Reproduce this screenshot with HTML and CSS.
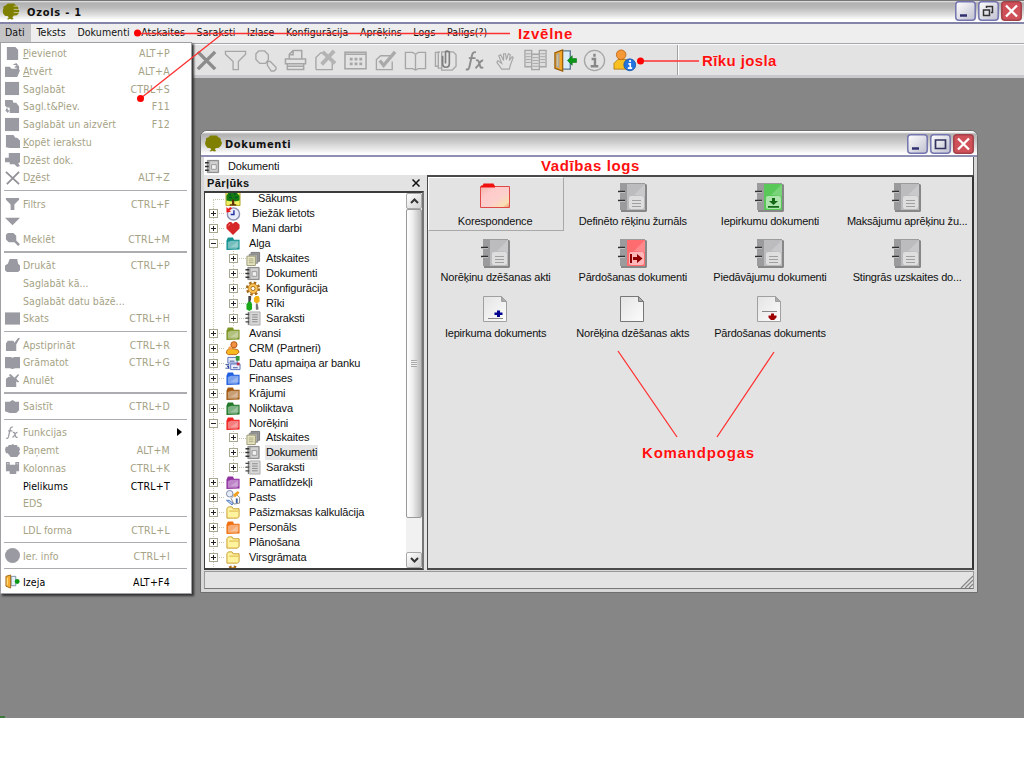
FILE: index.html
```html
<!DOCTYPE html>
<html lang="lv">
<head>
<meta charset="utf-8">
<title>Ozols - 1</title>
<link rel="stylesheet" href="styles.css">
</head>
<body>
<svg class="defs" width="0" height="0" aria-hidden="true">
  <defs>
    <linearGradient id="gBtn" x1="0" y1="0" x2="1" y2="1"><stop offset="0" stop-color="#fff"/><stop offset="1" stop-color="#bfbfd0"/></linearGradient>
    <linearGradient id="gPink" x1="0" y1="0" x2="1" y2="1"><stop offset="0" stop-color="#f3b3a8"/><stop offset=".3" stop-color="#ffcaca"/><stop offset=".6" stop-color="#fbd0cc"/><stop offset=".85" stop-color="#f8e0b0"/><stop offset="1" stop-color="#e88a60"/></linearGradient>
    <linearGradient id="gPage" x1="0" y1="0" x2="1" y2="1"><stop offset="0" stop-color="#e4e4e4"/><stop offset="1" stop-color="#fcfcfc"/></linearGradient>

    <symbol id="oak" viewBox="0 0 16 16"><path fill="#808000" d="M5 .5h6l1.500 1.500 2 1 .5 2.500 1 2-1 2.500-2 2-3 .5-.7 1 1.200 1.500-2 .5-1.500-.7-1.500.7-1.500-.5L5.800 14l-.6-1.500-3-.5-1.700-2.300L0 7.500l.8-2L1 3l2.200-1z"/></symbol>
    <symbol id="oakStripe" viewBox="0 0 16 16"><use href="#oak"/><path d="M10.500 3H16M10.500 6H16M10.500 9H16M10.500 12H16" stroke="#d8d8c0" stroke-width=".7"/></symbol>

    <symbol id="folder" viewBox="0 0 16 16"><path d="M1 5 2.500 1.500h5.500L9 4h6v10.500l-14 .5z" fill="currentColor"/><path d="M2.500 6.500 6 5h8v7l-2 1.500H2.500z" fill="#fff" opacity=".42"/><path d="M5 12 13 6v6z" fill="#fff" opacity=".25"/></symbol>
    <symbol id="yfolder" viewBox="0 0 16 16"><path d="M1.500 4 3 2h4l1 2h6.500v8.500l-2 1.500h-11z" fill="#fff3a0" stroke="#c89a28"/><path d="M4 6.500h10" stroke="#d8b040"/></symbol>
    <symbol id="pages" viewBox="0 0 16 16"><path d="M6 1.500h9V11H6z" fill="#999" stroke="#777"/><path d="M4 3.500h9V13H4z" fill="#aaa" stroke="#888"/><path d="M1.500 5.500h9v10h-9z" fill="#e6e4c0" stroke="#9c9a78"/><path d="M3.500 8.500h5M3.500 10.500h5M3.500 12.500h5" stroke="#aaa880"/></symbol>
    <symbol id="book" viewBox="0 0 16 16"><path d="M2.500 1.500h12v13h-12z" fill="#aaa" stroke="#858585"/><path d="M5.500 2.500h8v11h-8z" fill="#d0d0d0"/><path d="M7 6h5v5H7z" fill="#f2f2f2" stroke="#999"/><path d="M0 4h4M0 8h4M0 12h4" stroke="#333" stroke-width="1.400"/></symbol>
    <symbol id="list" viewBox="0 0 16 16"><path d="M4.500 1h11v14h-11z" fill="#d8d8d8" stroke="#aaa"/><path d="M7 4h6M7 6.500h6M7 9h6M7 11.500h6" stroke="#888"/><path d="M3 1v14" stroke="#555"/><path d="M0 3.500h4M0 7.500h4M0 11.500h4" stroke="#444" stroke-width="1.300"/></symbol>
    <symbol id="tree" viewBox="0 0 16 16"><path fill="#f0f060" stroke="#b0a020" d="M.5.5h15v15H.5z"/><path fill="#147a14" d="M3 2h9l3 3v5l-4 1H5l-4-1V5z"/><path d="M4 4h2M9 3h2M4 7h3M10 7h3" stroke="#052" stroke-width="1.500"/><path fill="#5a2a0a" d="m7 9 2 0 .5 5h2v1.500h-7V14H7z"/></symbol>
    <symbol id="clock" viewBox="0 0 16 16"><circle cx="8.500" cy="8.500" r="6.500" fill="#e8ecfa" stroke="#8c90b0" stroke-width="1.500"/><path d="M9 4.500V9H5.500" fill="none" stroke="#2030a0" stroke-width="1.500"/><path d="M1 1v6l5-1-2-1 3-2.500L5 1 3 3z" fill="#f01818"/></symbol>
    <symbol id="heart" viewBox="0 0 16 16"><path d="M8 15 1 8V4l3-3h2l2 2 2-2h2l3 3v4z" fill="#d62828"/><path d="m3 5 2-2" stroke="#f89090"/></symbol>
    <symbol id="gear" viewBox="0 0 16 16"><circle cx="8" cy="8" r="6.200" fill="none" stroke="#a06a18" stroke-width="2.800" stroke-dasharray="2.600 2.270"/><circle cx="8" cy="8" r="5.200" fill="#f8c458" stroke="#c88020"/><circle cx="8" cy="8" r="2.200" fill="#fff" stroke="#a87018"/></symbol>
    <symbol id="tools" viewBox="0 0 16 16"><path d="M3 0h3v3l-1 4H3z" fill="#444"/><path d="M1 9 3 6h3l1 3v5l-3 2-3-2z" fill="#18a818"/><path d="m9 2 2-2h3l1 2v4l-3 2-3-2z" fill="#f0b010"/><path d="M11 8h2l1 6-2 1-1-1z" fill="#777"/></symbol>
    <symbol id="people" viewBox="0 0 16 16"><circle cx="9" cy="4" r="3.300" fill="#f09040" stroke="#b05010"/><path d="M1 13q-.5-4 4-5l5 .5q4 0 4.500 3.500l-3 2.500H3z" fill="#f8b820" stroke="#c06010"/><circle cx="5" cy="7.500" r="2" fill="#f8a050"/></symbol>
    <symbol id="bank" viewBox="0 0 16 16"><path d="M2.500 1.500h10v6h-10z" fill="#e8ecff" stroke="#5570b8"/><path d="M5.500 8.500h10v6h-10z" fill="#e8ecff" stroke="#5570b8"/><path d="M4.500 5.500h5M8 12.500h5M0 9h4M0 13h4" stroke="#405090"/><path d="M11 0h4v5h-4z" fill="#389838"/><path d="M12 7h3v3h-3z" fill="#c03048"/><path d="M1 10h3v4z" fill="#2840a0"/></symbol>
    <symbol id="mail" viewBox="0 0 16 16"><circle cx="4.500" cy="4" r="3.500" fill="#e8ecf8" stroke="#7888a8"/><path d="M6 9 11 4l4 4v6l-6 1z" fill="#fff" stroke="#888"/><path d="m8 5 5-4 2 2-5 5z" fill="#f0a020"/><path d="M1 11h3l4 3-1 2z" fill="#b8d0ff" stroke="#5078b8"/><path d="M11 9h2v5h-2z" fill="#4060a0"/></symbol>
    <symbol id="door" viewBox="0 0 24 24"><path d="M7 2h10v19H7z" fill="#d8ecfa" stroke="#5a7890"/><path d="M1 4 9 1v22l-8-3z" fill="#f6a828" stroke="#9a6010"/><path d="m3 6 2-1v14l-2-1z" fill="#ffe080"/><path d="m14 12 5-5v3h4.500v4H19v3z" fill="#0a9818" stroke="#056a10" stroke-width=".6"/></symbol>
    <symbol id="doorSmall" viewBox="0 0 16 16"><path d="M6.500 2.500h5v10h-5z" fill="#e4f0fa" stroke="#7890a0"/><path d="M1 2.500 6 1v14l-5-2z" fill="#f8ac30" stroke="#a06818"/><path d="M2.500 4v8" stroke="#ffe890"/><circle cx="13" cy="8" r="2.600" fill="#0a9818"/></symbol>

    <symbol id="notebook" viewBox="0 0 32 32"><path d="M4 3h25l1 1v26l-1 1H4z" fill="#878787"/><path d="M3 2h25v27H3z" fill="#9b9b9d"/><path d="M10 3h18v26H10z" fill="currentColor"/><path d="M28 3v12L17 14z" fill="#fff" opacity=".2"/><rect x="12" y="15" width="15" height="13" rx="2" fill="#fff" opacity=".5"/><path d="M1 11.500h7M1 20.500h7" stroke="#eee"/><path d="M1 10.500h7M1 19.500h7" stroke="#303030" stroke-width="1.600"/></symbol>
    <symbol id="sheet" viewBox="0 0 32 32"><path d="M3.500 3.500h18l5 5v20h-23z" fill="url(#gPage)" stroke="currentColor"/><path d="M21.500 3.500v5h5z" fill="#aaa" stroke="currentColor"/></symbol>

    <symbol id="mDoc" viewBox="0 0 16 16"><path d="M2 1h9l3 3v11H2z"/></symbol>
    <symbol id="mOpen" viewBox="0 0 16 16"><path d="M0 4h5l2 2h5l1-1h-3l2-3 3 1v4l1 1-3 7H0zM8 2l4-2 2 2z"/></symbol>
    <symbol id="mSave" viewBox="0 0 16 16"><path d="M0 1h15v14H0z"/></symbol>
    <symbol id="mAdd" viewBox="0 0 16 16"><path d="M0 1h8l1 3h3l3 4v7H5V9H2L0 7zM1 10h2v2h2l-2 3-3-3h1z"/></symbol>
    <symbol id="mCopy" viewBox="0 0 16 16"><path d="M1 1h8l2 3h2l3 3v8H5l-4-1z"/></symbol>
    <symbol id="mCut" viewBox="0 0 16 16"><path d="M4 1h12v10l-2 1 2 3-3 1-3-3H5v-2H0V6h4z"/></symbol>
    <symbol id="mX" viewBox="0 0 16 16"><path d="m1 2 14 13M15 2 2 15" stroke="#929298" stroke-width="2" fill="none"/></symbol>
    <symbol id="mFilter" viewBox="0 0 16 16"><path d="M1 2h14v2l-5 5v6H6V9L1 4z"/></symbol>
    <symbol id="mDown" viewBox="0 0 16 16"><path d="M0 4h16l-8 8z"/></symbol>
    <symbol id="mFind" viewBox="0 0 16 16"><path d="M3 1h6l3 3v5l4 4-2 2-4-4H4L1 8V3z"/></symbol>
    <symbol id="mPrint" viewBox="0 0 16 16"><path d="M5 1h8l1 5 2 2v5l-2 2H2l-2-2V8l3-2z"/></symbol>
    <symbol id="mView" viewBox="0 0 16 16"><path d="M0 1.500h16v13H0z"/></symbol>
    <symbol id="mOk" viewBox="0 0 16 16"><path d="M3 4h6l1 2 4-5h2l-4 7v7H1V7z"/></symbol>
    <symbol id="mBook" viewBox="0 0 16 16"><path d="M0 2h6l2 1 2-1h6v12h-5l-3 1-3-1H0z"/></symbol>
    <symbol id="mVoid" viewBox="0 0 16 16"><path d="M1 6l3-2h2L4 2l2-1 4 4 4-4 1 1-3 4 3 3-1 1-2-1v6H1z"/></symbol>
    <symbol id="mLink" viewBox="0 0 16 16"><path d="M0 3h5l3-2 3 2h4v9l-3 3H5l-5-2z"/></symbol>
    <symbol id="mHand" viewBox="0 0 16 16"><path d="M1 4h2l1-2h3l1-1 2 1 3 0v2h2l1 3-1 2 1 2-3 4H6l-3-4H1L0 7z"/></symbol>
    <symbol id="mCols" viewBox="0 0 16 16"><path d="M1 2h4v3h6V2h4v10h-3v3H5v-3H1z"/><path d="M2.500 3.500h1v1h-1zM12.500 3.500h1v1h-1z" fill="#fff"/></symbol>
    <symbol id="mInfo" viewBox="0 0 16 16"><circle cx="8" cy="8" r="8"/></symbol>
    <symbol id="fx" viewBox="0 0 24 24"><path d="M2 21q2.500 1.500 3.500-2L8.500 6q1-3.500 4-2.500M5 9.500h7M12.500 12q2-1 3 1.500l1.500 5q1 2 3 .5M20 12q-2-.5-3.500 2.500T12 20" fill="none" stroke="currentColor" stroke-width="2"/></symbol>
  </defs>
</svg>

<div class="desktop">
  <header class="titlebar">
    <svg class="app-icon" width="18" height="17"><use href="#oakStripe"/></svg>
    <span class="app-title">Ozols - 1</span>
    <div class="win-buttons">
      <svg width="21" height="20" viewBox="0 0 21 20"><rect x=".8" y=".8" width="19.400" height="18.400" rx="3" fill="url(#gBtn)" stroke="#7474b0" stroke-width="1.500"/><path d="M5 14.500h7" stroke="#303070" stroke-width="2.500"/></svg>
      <svg width="21" height="20" viewBox="0 0 21 20"><rect x=".8" y=".8" width="19.400" height="18.400" rx="3" fill="url(#gBtn)" stroke="#7474b0" stroke-width="1.500"/><path d="M8.500 7V5.500h6v6H13M5.500 9h6v5.500h-6zM5 9h7M8 5.500h7" fill="none" stroke="#333" stroke-width="1.500"/></svg>
      <svg width="21" height="20" viewBox="0 0 21 20"><rect x=".8" y=".8" width="19.400" height="18.400" rx="3" fill="#cf5058" stroke="#a44048" stroke-width="1.500"/><path d="m5 4.500 11 11m0-11-11 11" stroke="#fff" stroke-width="2.300"/></svg>
    </div>
  </header>

  <nav class="menubar">
    <span class="open">Dati</span><span>Teksts</span><span>Dokumenti</span><span>Atskaites</span><span>Saraksti</span><span>Izlase</span><span>Konfigurācija</span><span>Aprēķins</span><span>Logs</span><span>Palīgs(?)</span>
  </nav>

  <div class="toolbar">
    <div class="tools">
      <svg viewBox="0 0 24 24"><path d="m3 3 18 18M21 3 3 21" stroke="#8c8c8c" stroke-width="3.600"/></svg>
      <svg viewBox="0 0 24 24"><path d="M1.500 2.500h21v3L15 13v8.500H9.500V13l-8-7.500z"/></svg>
      <svg viewBox="0 0 24 24"><path d="M5 2h6l4 4v5l-3 4H6l-4-4V5zM14 13l3 0 6 6v2l-2 2h-3l-4-6z"/></svg>
      <svg viewBox="0 0 24 24"><path d="M5.500 10.500v-5l4-4h9v9M1.500 10.500h21v5h-21zM3.500 15.500v6h17v-6M3 18h18M9.500 2v4h-4" stroke-width="1.600"/></svg>
      <svg viewBox="0 0 24 24"><path d="M2 21.500V9l5-5h3M2 21.500h17V14"/><path d="m9 3 13 12M21 2 8 16" stroke="#b4b4b4" stroke-width="4"/></svg>
      <svg viewBox="0 0 24 24"><path d="M1 3.500h22v17H1zM1 5.500h22" stroke-width="1.600"/><path d="M6 10.500h13M6 15.500h13" stroke-width="3" stroke-dasharray="3 2"/></svg>
      <svg viewBox="0 0 24 24"><path d="M17 7H7L2.500 11v10.500H19V13"/><path d="m6 12 4 5L22 3" stroke="#aaa" stroke-width="3.500"/></svg>
      <svg viewBox="0 0 24 24"><path d="M1.500 3.500H9l3 2 3-2h7.500v17H15l-3 1.500-3-1.500H1.500zM12 5v16"/></svg>
      <svg viewBox="0 0 24 24"><path d="M5 18H1.500V3.500H6M6 3H4.500v17H8M8 3h12l3 3v12l-4 4H8z"/><path d="M9 7v8q0 4 3.500 4t3.500-4V3q-4-2-4 1v11" stroke="#7e7e7e" stroke-width="1.700"/></svg>
      <svg viewBox="0 0 24 24" class="fx"><use href="#fx"/></svg>
      <svg viewBox="0 0 24 24"><path d="M8 21 3 14l1-2 4 3-3-8 2-1 3 6V5h2l1 6 2-6 2 1-1 6 3-4 1 1-3 8-1 4z" stroke-width="1.200"/></svg>
      <svg viewBox="0 0 24 24"><path d="M1 1.500h7v17H1zM16 1.500h7v17h-7zM8 5.500h8v16H8z" fill="#ddd"/><path d="M2 5h5M2 8h5M2 11h5M2 14h5M17 5h5M17 8h5M17 11h5M17 14h5M9 9h6M9 12h6M9 15h6M9 18h6" stroke-width="1"/></svg>
      <svg viewBox="0 0 24 24"><use href="#door"/></svg>
      <svg viewBox="0 0 24 24"><circle cx="12" cy="12" r="10.500"/><path d="M9 10.500h3.500V18M8 18h8M12 5v3" stroke="#888" stroke-width="2.500"/></svg>
      <svg viewBox="0 0 24 24"><path d="M1 21v-6l4-4h9l2 3v7z" fill="#f8c020" stroke="#b07010" stroke-width=".8"/><circle cx="8.500" cy="6" r="5" fill="#f59838" stroke="#b86010" stroke-width=".8"/><circle cx="17.500" cy="16.500" r="6.200" fill="#2474e0" stroke="#1450a0" stroke-width=".8"/><path d="M16 15.500h2V20M15.500 20h4.500M17.800 11.500v2" stroke="#fff" stroke-width="1.700"/></svg>
    </div>
    <div class="toolbar-end"></div>
  </div>

  <section class="window">
    <header class="w-title">
      <svg width="17" height="17"><use href="#oak"/></svg>
      <span>Dokumenti</span>
      <div class="win-buttons">
        <svg width="21" height="20" viewBox="0 0 21 20"><rect x=".8" y=".8" width="19.400" height="18.400" rx="3" fill="url(#gBtn)" stroke="#7474b0" stroke-width="1.500"/><path d="M5 14.500h7" stroke="#303070" stroke-width="2.500"/></svg>
        <svg width="21" height="20" viewBox="0 0 21 20"><rect x=".8" y=".8" width="19.400" height="18.400" rx="3" fill="url(#gBtn)" stroke="#7474b0" stroke-width="1.500"/><path d="M5.500 6h10v8.500h-10zM5 6h11" fill="none" stroke="#333360" stroke-width="1.700"/></svg>
        <svg width="21" height="20" viewBox="0 0 21 20"><rect x=".8" y=".8" width="19.400" height="18.400" rx="3" fill="#cf5058" stroke="#a44048" stroke-width="1.500"/><path d="m5 4.500 11 11m0-11-11 11" stroke="#fff" stroke-width="2.300"/></svg>
      </div>
    </header>
    <div class="w-path"><svg width="15" height="15"><use href="#book"/></svg><span>Dokumenti</span></div>
    <div class="w-body">
      <aside class="browser">
        <div class="b-head"><b>Pārļūks</b><svg width="8" height="8" viewBox="0 0 8 8"><path d="m.5.500 7 7m0-7-7 7" stroke="#111" stroke-width="1.500"/></svg></div>
        <div class="b-box">
          <ul class="b-tree">
            <li class="leaf wide"><i></i><svg><use href="#tree"/></svg><span>Sākums</span></li>
            <li class="mid"><i class="plus"></i><svg><use href="#clock"/></svg><span>Biežāk lietots</span></li>
            <li class="mid"><i class="plus"></i><svg><use href="#heart"/></svg><span>Mani darbi</span></li>
            <li><i class="minus"></i><svg class="teal"><use href="#folder"/></svg><span>Alga</span></li>
            <li class="sub"><i class="plus"></i><svg><use href="#pages"/></svg><span>Atskaites</span></li>
            <li class="sub"><i class="plus"></i><svg><use href="#book"/></svg><span>Dokumenti</span></li>
            <li class="sub"><i class="plus"></i><svg><use href="#gear"/></svg><span>Konfigurācija</span></li>
            <li class="sub"><i class="plus"></i><svg><use href="#tools"/></svg><span>Rīki</span></li>
            <li class="sub"><i class="plus"></i><svg><use href="#list"/></svg><span>Saraksti</span></li>
            <li><i class="plus"></i><svg class="olive"><use href="#folder"/></svg><span>Avansi</span></li>
            <li><i class="plus"></i><svg><use href="#people"/></svg><span>CRM (Partneri)</span></li>
            <li><i class="plus"></i><svg><use href="#bank"/></svg><span>Datu apmaiņa ar banku</span></li>
            <li><i class="plus"></i><svg class="blue"><use href="#folder"/></svg><span>Finanses</span></li>
            <li><i class="plus"></i><svg class="brown"><use href="#folder"/></svg><span>Krājumi</span></li>
            <li><i class="plus"></i><svg class="green"><use href="#folder"/></svg><span>Noliktava</span></li>
            <li><i class="minus"></i><svg class="red"><use href="#folder"/></svg><span>Norēķini</span></li>
            <li class="sub"><i class="plus"></i><svg><use href="#pages"/></svg><span>Atskaites</span></li>
            <li class="sub"><i class="plus"></i><svg><use href="#book"/></svg><span class="sel">Dokumenti</span></li>
            <li class="sub"><i class="plus"></i><svg><use href="#list"/></svg><span>Saraksti</span></li>
            <li><i class="plus"></i><svg class="purple"><use href="#folder"/></svg><span>Pamatlīdzekļi</span></li>
            <li><i class="plus"></i><svg><use href="#mail"/></svg><span>Pasts</span></li>
            <li><i class="plus"></i><svg><use href="#yfolder"/></svg><span>Pašizmaksas kalkulācija</span></li>
            <li><i class="plus"></i><svg class="orange"><use href="#folder"/></svg><span>Personāls</span></li>
            <li><i class="plus"></i><svg><use href="#yfolder"/></svg><span>Plānošana</span></li>
            <li><i class="plus"></i><svg><use href="#yfolder"/></svg><span>Virsgrāmata</span></li>
            <li class="near"><i class="plus"></i><svg><use href="#gear"/></svg><span>Konfigurācija</span></li>
          </ul>
          <div class="scroll">
            <div class="s-btn"><svg width="9" height="6" viewBox="0 0 9 6"><path d="m1 5 3.500-3.500L8 5" fill="none" stroke="#333" stroke-width="2"/></svg></div>
            <div class="s-thumb"><span></span></div>
            <div class="s-track"></div>
            <div class="s-btn"><svg width="9" height="6" viewBox="0 0 9 6"><path d="m1 1 3.500 3.500L8 1" fill="none" stroke="#333" stroke-width="2"/></svg></div>
          </div>
        </div>
      </aside>
      <div class="commands">
        <div class="cmd active"><svg viewBox="0 0 32 32"><path d="M3 6 4.500 2.500h10L16 6z" fill="#f01010"/><path d="M1.500 5.500h29v21h-29z" fill="url(#gPink)" stroke="#e04848"/><path d="M2 5.500h14" stroke="#f01010" stroke-width="2"/></svg><span>Korespondence</span></div>
        <div class="cmd"><svg viewBox="0 0 32 32" class="nb"><use href="#notebook"/><path d="M15 19.500h9M15 22.500h9M15 25.500h9" stroke="#a0a0a0"/></svg><span>Definēto rēķinu žurnāls</span></div>
        <div class="cmd"><svg viewBox="0 0 32 32" class="nb-green"><use href="#notebook"/><path d="M18 17h3v3h3l-4.500 4L15 20h3zM14 25h11v1.800H14z" fill="#146a14"/></svg><span>Iepirkumu dokumenti</span></div>
        <div class="cmd"><svg viewBox="0 0 32 32" class="nb"><use href="#notebook"/><path d="M15 19.500h9M15 22.500h9M15 25.500h9" stroke="#a0a0a0"/></svg><span>Maksājumu aprēķinu žu...</span></div>
        <div class="cmd"><svg viewBox="0 0 32 32" class="nb"><use href="#notebook"/><path d="M15 19.500h9M15 22.500h9M15 25.500h9" stroke="#a0a0a0"/></svg><span>Norēķinu dzēšanas akti</span></div>
        <div class="cmd"><svg viewBox="0 0 32 32" class="nb-red"><use href="#notebook"/><path d="M13 17h2v9h-2zM16 20h4v-3l5.500 4.500L20 26v-3h-4z" fill="#900000"/></svg><span>Pārdošanas dokumenti</span></div>
        <div class="cmd"><svg viewBox="0 0 32 32" class="nb"><use href="#notebook"/><path d="M15 19.500h9M15 22.500h9M15 25.500h9" stroke="#a0a0a0"/></svg><span>Piedāvājumu dokumenti</span></div>
        <div class="cmd"><svg viewBox="0 0 32 32" class="nb"><use href="#notebook"/><path d="M15 19.500h9M15 22.500h9M15 25.500h9" stroke="#a0a0a0"/></svg><span>Stingrās uzskaites do...</span></div>
        <div class="cmd"><svg viewBox="0 0 32 32" class="sh"><use href="#sheet"/><path d="M17 17.500h3v2h2.500v2.500H20v2h-3v-2h-2.500v-2.500H17z" fill="#000090"/><path d="M8 25.500h15" stroke="#888"/></svg><span>Iepirkuma dokuments</span></div>
        <div class="cmd"><svg viewBox="0 0 32 32" class="sh dark"><use href="#sheet"/></svg><span>Norēķina dzēšanas akts</span></div>
        <div class="cmd"><svg viewBox="0 0 32 32" class="sh"><use href="#sheet"/><path d="M17 20.500h3v2h2.500v2L20 27h-3l-2.500-2.500v-2H17z" fill="#a00000"/><path d="M8 18.500h15" stroke="#888"/></svg><span>Pārdošanas dokuments</span></div>
      </div>
    </div>
    <footer class="w-status"><svg width="13" height="13" viewBox="0 0 13 13"><path d="M1 13 13 1M5 13l8-8M9 13l4-4" stroke="#888" stroke-width="1.300"/></svg></footer>
  </section>

  <div class="dropdown">
    <div class="mi"><svg><use href="#mDoc"/></svg><span><u>P</u>ievienot</span><kbd>ALT+P</kbd></div>
    <div class="mi"><svg><use href="#mOpen"/></svg><span><u>A</u>tvērt</span><kbd>ALT+A</kbd></div>
    <div class="mi"><svg><use href="#mSave"/></svg><span>Saglabāt</span><kbd>CTRL+S</kbd></div>
    <div class="mi"><svg><use href="#mAdd"/></svg><span>Sagl.t&amp;Piev.</span><kbd>F11</kbd></div>
    <div class="mi"><svg><use href="#mSave"/></svg><span>Saglabāt un aizvērt</span><kbd>F12</kbd></div>
    <div class="mi"><svg><use href="#mCopy"/></svg><span><u>K</u>opēt ierakstu</span></div>
    <div class="mi"><svg><use href="#mCut"/></svg><span>Dzēst dok.</span></div>
    <div class="mi"><svg><use href="#mX"/></svg><span>D<u>z</u>ēst</span><kbd>ALT+Z</kbd></div>
    <hr>
    <div class="mi"><svg><use href="#mFilter"/></svg><span>Filtrs</span><kbd>CTRL+F</kbd></div>
    <div class="mi"><svg><use href="#mDown"/></svg></div>
    <div class="mi"><svg><use href="#mFind"/></svg><span>Meklēt</span><kbd>CTRL+M</kbd></div>
    <hr>
    <div class="mi"><svg><use href="#mPrint"/></svg><span>Drukāt</span><kbd>CTRL+P</kbd></div>
    <div class="mi"><svg></svg><span>Saglabāt kā...</span></div>
    <div class="mi"><svg></svg><span>Saglabāt datu bāzē...</span></div>
    <div class="mi"><svg><use href="#mView"/></svg><span>Skats</span><kbd>CTRL+H</kbd></div>
    <hr>
    <div class="mi"><svg><use href="#mOk"/></svg><span>Apstiprināt</span><kbd>CTRL+R</kbd></div>
    <div class="mi"><svg><use href="#mBook"/></svg><span>Grāmatot</span><kbd>CTRL+G</kbd></div>
    <div class="mi"><svg><use href="#mVoid"/></svg><span>Anulēt</span></div>
    <hr>
    <div class="mi"><svg><use href="#mLink"/></svg><span>Saistīt</span><kbd>CTRL+D</kbd></div>
    <hr>
    <div class="mi"><svg><use href="#fx"/></svg><span>Funkcijas</span><b class="arrow"></b></div>
    <div class="mi"><svg><use href="#mHand"/></svg><span>Paņemt</span><kbd>ALT+M</kbd></div>
    <div class="mi"><svg><use href="#mCols"/></svg><span>Kolonnas</span><kbd>CTRL+K</kbd></div>
    <div class="mi on"><svg></svg><span>Pielikums</span><kbd>CTRL+T</kbd></div>
    <div class="mi"><svg></svg><span>EDS</span></div>
    <hr>
    <div class="mi"><svg></svg><span>LDL forma</span><kbd>CTRL+L</kbd></div>
    <hr>
    <div class="mi"><svg><use href="#mInfo"/></svg><span>Ier. info</span><kbd>CTRL+I</kbd></div>
    <hr>
    <div class="mi on"><svg><use href="#doorSmall"/></svg><span>Izeja</span><kbd>ALT+F4</kbd></div>
  </div>

  <svg class="callouts" width="1024" height="718">
    <g stroke="#ff3030" stroke-width="1.300">
      <path d="M137 33.500h373M222 34 141 98M641 61h58M618 351l59 86M774 352l-57 85"/>
    </g>
    <g fill="#f00"><circle cx="137.500" cy="33" r="3.500"/><circle cx="140.500" cy="98.500" r="3.500"/><circle cx="640.500" cy="61" r="3.500"/></g>
    <path d="M0 716h5v2H0z" fill="#3c7a3c"/>
  </svg>
  <span class="note n-menu">Izvēlne</span>
  <span class="note n-tools">Rīku josla</span>
  <span class="note n-window">Vadības logs</span>
  <span class="note n-cmds">Komandpogas</span>
</div>
</body>
</html>
```
FILE: styles.css
```css
* { box-sizing: border-box; }
body { margin: 0; background: #fff; font-family: "DejaVu Sans Condensed", "DejaVu Sans", sans-serif; font-size: 10.500px; color: #111; }
.defs { position: absolute; }
.desktop { position: relative; width: 1024px; height: 718px; background: #868686; overflow: hidden; }

.titlebar { display: flex; align-items: center; height: 24px; padding: 0 2px 1px 2px; border-top: 1px solid #777; border-bottom: 2px solid #8484a8; background: linear-gradient(#e8e8e8 0, #b0b0b0 2px, #bcbcbc 7px, #e0e0e0 14px, #fff 19px); }
.app-title { margin: 2px 0 0 7px; font: bold 11px "DejaVu Sans Condensed", sans-serif; letter-spacing: .75px; }
.win-buttons { display: flex; gap: 2px; margin-left: auto; }

.menubar { display: flex; height: 20px; background: #edeeed; border-bottom: 1px solid #a4a8ac; }
.menubar span { padding: 0 5.800px; line-height: 17px; letter-spacing: .08px; white-space: nowrap; }
.menubar .open { background: #c4c4c6; padding: 0 6px 0 5px; }

.toolbar { display: flex; height: 34px; background: #e3e3e3; border-top: 1px solid #fafafa; border-bottom: 3px solid #c9c9cd; }
.tools { display: flex; align-items: center; gap: 6.930px; width: 678px; padding-left: 194.500px; border-right: 1px solid #a0a0a0; }
.tools svg { width: 23px; height: 23px; flex: none; fill: none; stroke: #a6a6a6; stroke-width: 1.400; }
.tools .fx { color: #8c8c8c; }
.toolbar-end { border-left: 1px solid #fff; flex: 1; }

.window { position: absolute; left: 200px; top: 130px; width: 778px; height: 463px; display: flex; flex-direction: column; padding: 0 3px 3px; background: #d8d8d8; border: 1px solid #6e6e6e; border-radius: 7px 7px 0 0; font: 11px "Liberation Sans", Arial, sans-serif; letter-spacing: -.15px; }
.w-title { display: flex; flex: none; align-items: center; height: 26px; margin: 0 -3px; padding: 1px 3px 0 4px; border-radius: 6px 6px 0 0; border-bottom: 2px solid #9090b4; background: linear-gradient(#fff 0, #fff 1px, #b0b0b0 3px, #c4c4c4 9px, #e8e8e8 18px, #fff 23px); font: bold 11px "DejaVu Sans Condensed", sans-serif; }
.w-title span { margin: 2px 0 0 3px; letter-spacing: .6px; }
.w-path { display: flex; flex: none; align-items: center; height: 18px; padding-left: 1px; background: #fff; border-right: 1px solid #555; }
.w-path span { margin-left: 8px; }
.w-body { display: flex; flex: 1; min-height: 0; gap: 3px; background: #e3e3e3; }
.browser { display: flex; flex-direction: column; width: 220px; }
.b-head { display: flex; justify-content: space-between; align-items: center; height: 16px; padding: 0 4px 0 3px; letter-spacing: .4px; }
.b-box { display: flex; flex: 1; min-height: 0; border: 2px solid #3c3c3c; border-left-width: 1px; border-right-color: #777; background: #fff; overflow: hidden; }
.b-tree { flex: 1; margin: -1.500px 0 0; padding: 0; list-style: none; background: repeating-linear-gradient(#c8c8b0 0 1px, transparent 1px 2px) 8px 8px / 1px 100% no-repeat; }
.b-tree li { display: flex; align-items: center; height: 14.940px; white-space: nowrap; background: repeating-linear-gradient(90deg, #c8c8b0 0 1px, transparent 1px 2px) 8px 7px / 12px 1px no-repeat; }
.b-tree .sub { padding-left: 20px; background: repeating-linear-gradient(90deg, #c8c8b0 0 1px, transparent 1px 2px) 28px 7px / 14px 1px no-repeat, repeating-linear-gradient(#c8c8b0 0 1px, transparent 1px 2px) 28px 0 / 1px 100% no-repeat; }
.b-tree i { width: 9px; height: 9px; margin: 0 12px 0 4px; flex: none; }
.plus, .minus { border: 1px solid #a8a890; background: linear-gradient(#222, #222) center / 5px 1px no-repeat #fff; }
.plus { background: linear-gradient(#222, #222) center / 5px 1px no-repeat, linear-gradient(#222, #222) center / 1px 5px no-repeat #fff; }
.b-tree .sub i { margin-right: 7px; }
.b-tree svg { width: 16px; height: 15px; flex: none; }
.b-tree li:not(.sub) svg { margin-left: -5px; }
.b-tree span { margin-left: 7px; padding: 0 1px; line-height: 15px; }
.b-tree .sub span { margin-left: 4px; }
.b-tree .wide span { margin-left: 16px; }
.b-tree .mid span { margin-left: 10px; }
.b-tree .near span { margin-left: 4px; }
.b-tree .sel { background: #e6e6e6; }
.teal { color: #109090; } .olive { color: #7c9424; } .blue { color: #2060e0; } .brown { color: #a05810; } .green { color: #207828; } .red { color: #f02020; } .purple { color: #9030a0; } .orange { color: #f07010; }
.scroll { display: flex; flex-direction: column; width: 16px; background: #f1f1f1; }
.s-btn { display: flex; align-items: center; justify-content: center; height: 16px; border: 1px solid #a8a8a8; border-radius: 2px; background: linear-gradient(135deg, #fff, #d0d0d0); }
.s-thumb { display: flex; align-items: center; justify-content: center; height: 309px; border: 1px solid #999; border-radius: 2px; background: linear-gradient(90deg, #fff, #eee 40%, #bbb); }
.s-thumb span { width: 6px; height: 7px; background: repeating-linear-gradient(#aaa 0 1px, #eee 1px 2px); }
.s-track { flex: 1; }
.commands { flex: 1; display: grid; grid-template-columns: repeat(4, 137.200px); grid-auto-rows: 56px; border: 2px solid #4a4a4a; border-right-color: #333; border-left-width: 1px; background: #e3e3e3; overflow: hidden; }
.cmd { display: flex; flex-direction: column; align-items: center; height: 54px; margin-left: -2px; padding-top: 4px; white-space: nowrap; line-height: 15px; letter-spacing: -.2px; }
.cmd.active { margin: 0 1px 0 0; border: 1px solid #a8a8a8; border-top-color: #fff; border-left-color: #fff; padding: 3px 2px 0 0; }
.cmd svg { width: 32px; height: 32px; margin-bottom: 1px; flex: none; }
.nb { color: #bcbcbe; } .nb-green { color: #58c858; } .nb-red { color: #ff6c70; }
.sh { color: #a0a0a0; } .dark { color: #777; }
.w-status { display: flex; flex: none; align-items: flex-end; justify-content: flex-end; height: 18px; margin-top: 1px; border: 1px solid #999; border-bottom-color: #777; background: #e3e3e3; }

.dropdown { position: absolute; left: 0; top: 42px; width: 192px; height: 552px; padding: 1.300px 4px 0 3px; border: 1px solid #a0a0a4; background: #fff; box-shadow: 2px 2px 2px #333; color: #a5a285; }
.mi { display: flex; align-items: center; height: 17.750px; white-space: nowrap; letter-spacing: .05px; }
.mi svg { width: 17px; height: 15px; flex: none; margin-right: 2px; fill: #9a9aa2; color: #9a9aa2; }
.mi kbd { margin-left: auto; margin-right: 17px; font: inherit; letter-spacing: .25px; }
.mi.on { color: #000; }
.dropdown hr { height: 1.400px; margin: 3.500px 0; border: 0; background: #acacb0; }
.arrow { margin: 0 5px 0 auto; border: 4px solid transparent; border-left: 5px solid #000; border-right: 0; }

.callouts { position: absolute; left: 0; top: 0; fill: none; }
.note { position: absolute; color: #ff1010; font: bold 15px "Liberation Sans", Arial, sans-serif; line-height: 16px; white-space: nowrap; text-shadow: 0 0 1px #fff; }
.n-menu { left: 518px; top: 26px; letter-spacing: .7px; }
.n-tools { left: 702px; top: 53px; letter-spacing: .4px; }
.n-window { left: 541px; top: 158px; letter-spacing: .6px; }
.n-cmds { left: 642px; top: 445px; letter-spacing: .8px; }
```
